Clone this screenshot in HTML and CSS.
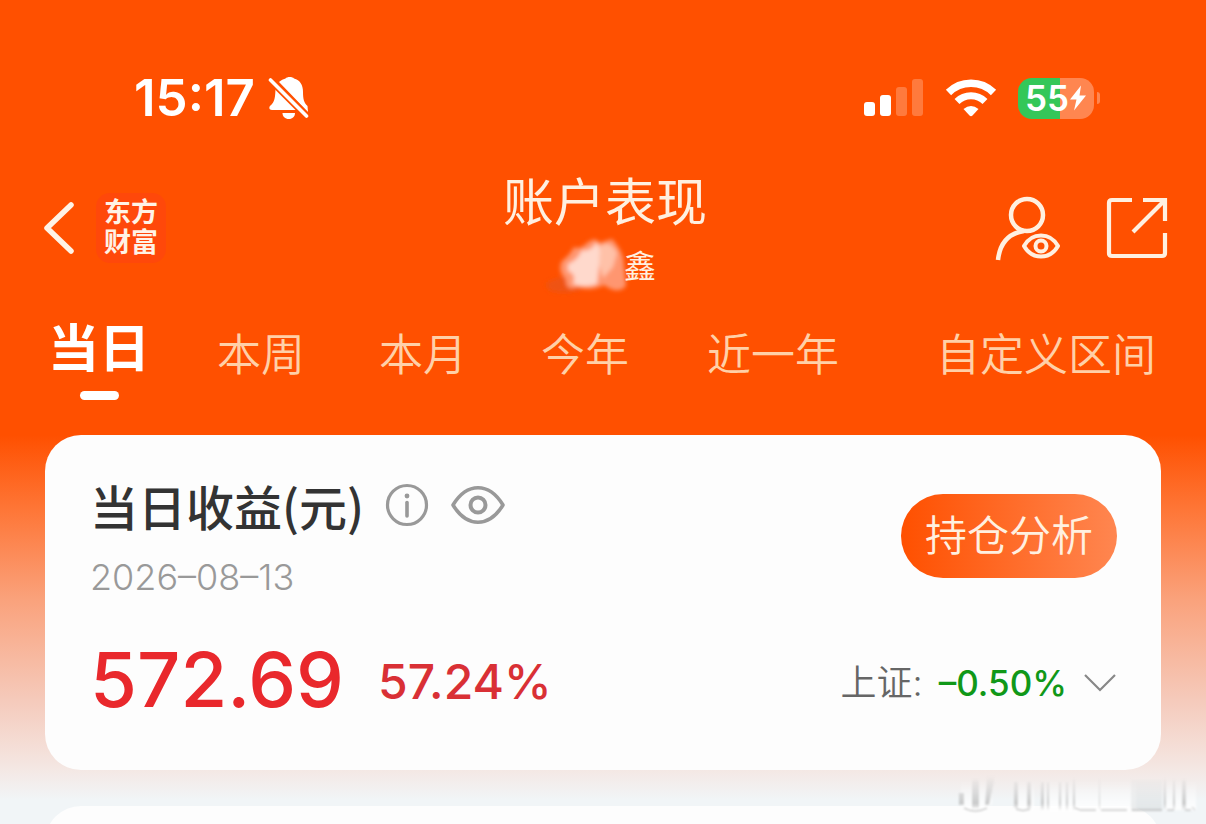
FILE: index.html
```html
<!DOCTYPE html>
<html lang="zh-CN">
<head>
<meta charset="utf-8">
<meta name="viewport" content="width=device-width, initial-scale=1">
<title>账户表现</title>
<link rel="stylesheet" href="styles.css">
</head>
<body>
<div class="page">
  <div class="status">
    <div class="status-left">
      <span class="clock">15:17</span>
      <svg class="bell" viewBox="0 0 42 44" width="42" height="44" aria-hidden="true">
        <path d="M11 6C14 3.500 16 3 17.500 2.500C19 .5 24.500 .5 26 2.500C32 4 35 9 35 16C35 23 36 27 39.500 30L40 36L11 6Z" fill="#fff"/>
        <path d="M7.500 10L31 34H4C.8 34 .8 31 2.500 29.500C6.500 26 7.500 22 7.500 10Z" fill="#fff"/>
        <path d="M14.500 37H27C27 40.500 24.500 43 20.800 43S14.500 40.500 14.500 37Z" fill="#fff"/>
        <path d="M2.500 4L38.500 40" stroke="#ff5000" stroke-width="7"/>
        <path d="M2.500 4L38.500 40" stroke="#fff" stroke-width="3.600" stroke-linecap="round"/>
      </svg>
    </div>
    <div class="status-right">
      <svg class="signal" viewBox="0 0 60 38" width="60" height="38" aria-hidden="true">
        <rect x="0" y="23" width="11" height="14" rx="3" fill="#fff"/>
        <rect x="16" y="16" width="11" height="21" rx="3" fill="#fff"/>
        <rect x="32" y="8" width="11" height="29" rx="3" fill="#ff7a3d"/>
        <rect x="48" y="0" width="11" height="37" rx="3" fill="#ff7a3d"/>
      </svg>
      <svg class="wifi" viewBox="0 0 52 38" width="52" height="38" aria-hidden="true">
        <path d="M3.500 13.500A32 32 0 0 1 48.500 13.500" fill="none" stroke="#fff" stroke-width="7.500"/>
        <path d="M12 22.500A20 20 0 0 1 40 22.500" fill="none" stroke="#fff" stroke-width="7"/>
        <path d="M18.500 30Q26 24 33.500 30L27.500 36.500Q26 38 24.500 36.500Z" fill="#fff"/>
      </svg>
      <div class="battery">
        <span class="battery-body"><span class="level">55</span><svg viewBox="0 0 18 26" width="18" height="26" aria-hidden="true"><path d="M12 .5L1 14.500H7.500L5 25.500L17 10.500H10.500Z" fill="#fff"/></svg></span>
        <span class="battery-tip"></span>
      </div>
    </div>
  </div>

  <header class="header">
    <div class="header-left">
      <button class="icon-button" aria-label="返回">
        <svg viewBox="0 0 34 54" width="34" height="54"><path d="M29 4L5 27L29 50" fill="none" stroke="#fff3e6" stroke-width="5.500" stroke-linecap="round" stroke-linejoin="round"/></svg>
      </button>
      <a class="brand" href="#home"><span>东方</span><span>财富</span></a>
    </div>
    <div class="heading">
      <h1 class="title">账户表现</h1>
      <div class="account">
        <svg class="smudge" viewBox="0 0 120 64" width="120" height="64" aria-hidden="true">
          <defs><filter id="soft" x="-20%" y="-20%" width="140%" height="140%"><feGaussianBlur stdDeviation="2"/></filter></defs>
          <g filter="url(#soft)">
            <path d="M15 49Q36 35 62 48Q44 62 20 56Z" fill="#e8561a" opacity=".7"/>
            <path d="M32 26Q40 20 44 12Q50 15 57 8Q66 1 69 8L82 4Q91 14 93 23L96 51Q88 60 74 50Q60 57 48 52Q35 57 36 44Q27 36 32 26Z" fill="#ff9670"/>
            <path d="M38 29Q48 25 52 15Q60 18 67 7Q73 18 69 31L67 49Q54 53 43 49Q47 39 38 36Z" fill="#ffd9cc"/>
            <path d="M70 11Q80 5 87 18L83 32L73 43L69 29Z" fill="#ffc1a8"/>
          </g>
        </svg>
        <span class="name">鑫</span>
      </div>
    </div>
    <div class="header-right">
      <button class="icon-button" aria-label="账户查看">
        <svg viewBox="0 0 66 66" width="66" height="66" fill="none" stroke="#fff0e0" stroke-width="4.500">
          <circle cx="33" cy="20" r="16"/>
          <path d="M4 65C6 47 16 38 30 36"/>
          <path d="M30 51C38 37 56 37 64 51C56 65 38 65 30 51Z" stroke-linejoin="round" stroke-width="4"/>
          <circle cx="47" cy="51" r="5.500" stroke-width="4"/>
        </svg>
      </button>
      <button class="icon-button" aria-label="分享">
        <svg viewBox="0 0 62 62" width="62" height="62" fill="none" stroke="#fff0e0" stroke-width="4.200">
          <path d="M26 3H6Q3 3 3 6V56Q3 59 6 59H56Q59 59 59 56V36"/>
          <path d="M37 3H59V24M58 4L27 35"/>
        </svg>
      </button>
    </div>
  </header>

  <nav class="tabs">
    <a class="tab active" href="#day">当日</a>
    <a class="tab" href="#week">本周</a>
    <a class="tab" href="#month">本月</a>
    <a class="tab" href="#year">今年</a>
    <a class="tab" href="#last">近一年</a>
    <a class="tab last" href="#custom">自定义区间</a>
  </nav>

  <main class="cards">
    <section class="card">
      <div class="row">
        <div>
          <div class="label-row">
            <h2 class="label">当日收益(元)</h2>
            <button class="icon-button" aria-label="说明">
              <svg viewBox="0 0 44 44" width="44" height="44" fill="none" stroke="#999"><circle cx="22" cy="22" r="19.500" stroke-width="3.200"/><circle cx="22" cy="13" r="2.400" fill="#999" stroke="none"/><path d="M22 19.500V33" stroke-width="3.600" stroke-linecap="round"/></svg>
            </button>
            <button class="icon-button" aria-label="显示金额">
              <svg viewBox="0 0 56 44" width="56" height="44" fill="none" stroke="#999"><path d="M3 22C17 -1 39 -1 53 22C39 45 17 45 3 22Z" stroke-width="3.600" stroke-linejoin="round"/><circle cx="28" cy="22" r="7.500" stroke-width="4"/></svg>
            </button>
          </div>
          <time class="date" datetime="2026-08-13">2026–08–13</time>
        </div>
        <button class="analysis">持仓分析</button>
      </div>
      <div class="row figures">
        <div class="profit"><strong class="amount">572.69</strong><span class="rate">57.24%</span></div>
        <button class="index"><span class="index-name">上证:</span><span class="index-rate">–0.50%</span>
          <svg viewBox="0 0 34 20" width="34" height="20" fill="none"><path d="M2 2L17 17L32 2" stroke="#888" stroke-width="2.200"/></svg>
        </button>
      </div>
    </section>
    <section class="card next"></section>
  </main>

  <svg class="watermark" viewBox="0 0 244 42" width="244" height="42" aria-hidden="true">
    <defs>
      <linearGradient id="fade" x1="0" y1="0" x2="0" y2="1"><stop offset="0" stop-color="#999" stop-opacity="0"/><stop offset=".8" stop-color="#999" stop-opacity=".5"/><stop offset="1" stop-color="#999" stop-opacity=".1"/></linearGradient>
      <linearGradient id="light" x1="0" y1="0" x2="0" y2="1"><stop offset="0" stop-color="#fff" stop-opacity="0"/><stop offset="1" stop-color="#fff" stop-opacity=".9"/></linearGradient>
      <linearGradient id="block" x1="0" y1="0" x2="0" y2="1"><stop offset="0" stop-color="#ccd0d1" stop-opacity=".1"/><stop offset="1" stop-color="#ccd0d1" stop-opacity=".4"/></linearGradient>
      <filter id="haze"><feGaussianBlur stdDeviation="1"/></filter>
    </defs>
    <g filter="url(#haze)">
      <path d="M5 7H36V30Q20 44 5 31ZM58 7H78V36H58ZM86 7H180V37H86ZM209 7H240V36H209Z" fill="url(#light)"/>
      <path d="M3 19H8V31H3ZM16 6H23V34H16ZM31 2H39L33 31H29ZM58 8H62V34H58ZM71 8H75V34H71ZM85 8H88V36H85ZM91 8H93V36H91ZM103 8H105V36H103ZM110 8H112V36H110ZM117 5H119V36H117ZM143 5H144V36H143ZM208 5H210V35H208ZM217 6H219V36H217ZM226 6H230V36H226Z" fill="url(#fade)"/>
      <path d="M175 6H206V37H175Z" fill="url(#block)"/>
      <path d="M8 34Q19 40 31 34M60 35Q67 38 74 35M119 34Q124 37 130 36H140M145 36H171M176 36H206M211 36H218M229 36H235M236 33L239 36" fill="none" stroke="#aaa"/>
    </g>
  </svg>
</div>
</body>
</html>
```
FILE: styles.css
```css
* {
  box-sizing: border-box;
}

body {
  margin: 0;
  background: #f1f5f7;
  font-family: Inter, "Noto Sans CJK SC", sans-serif;
}

.page {
  position: relative;
  height: 100vh;
  overflow: hidden;
  background: linear-gradient(#ff5000 0, #ff5000 435px, #fe7637 510px, #faa27c 600px, #f5cabb 700px, #f4e7e3 768px, #f1f5f7 800px);
}

h1, h2 {
  margin: 0;
}

button {
  border: 0;
  padding: 0;
  background: none;
  font: inherit;
  cursor: pointer;
}

a {
  color: inherit;
  text-decoration: none;
}

svg {
  display: block;
}

.status {
  display: flex;
  justify-content: space-between;
  align-items: center;
  padding: 68px 106px 0 134px;
  color: #fff;
}

.status-left,
.status-right {
  display: flex;
  align-items: center;
}

.status-left {
  gap: 13px;
}

.clock {
  font-size: 51px;
  line-height: 60px;
  font-weight: 600;
}

.status-right {
  gap: 21px;
}

.battery {
  display: flex;
  align-items: center;
  gap: 3px;
}

.battery-body {
  display: flex;
  align-items: center;
  justify-content: center;
  width: 76px;
  height: 41px;
  border-radius: 14px;
  background: linear-gradient(90deg, #34c759 55%, #ff8650 55%);
}

.level {
  font-size: 35px;
  line-height: 41px;
  font-weight: 600;
}

.battery-tip {
  width: 3px;
  height: 12px;
  border-radius: 0 6px 6px 0;
  background: #ff8650;
}

.header {
  display: grid;
  grid-template-columns: 1fr auto 1fr;
  align-items: center;
  height: 136px;
  margin-top: 43px;
  padding: 0 38px 0 42px;
}

.header-left,
.header-right {
  display: flex;
  align-items: center;
  margin-bottom: 22px;
}

.header-left {
  gap: 20px;
}

.header-right {
  justify-content: flex-end;
  gap: 46px;
}

.brand {
  display: flex;
  flex-direction: column;
  align-items: center;
  justify-content: center;
  width: 70px;
  height: 70px;
  border-radius: 14px;
  background: #ff480a;
  color: #fff3e6;
  font-size: 27px;
  line-height: 30px;
  font-weight: 700;
}

.heading {
  align-self: start;
  display: flex;
  flex-direction: column;
  align-items: center;
}

.title {
  color: #fff0e0;
  font-size: 51px;
  line-height: 64px;
  font-weight: 400;
}

.account {
  display: flex;
  align-items: center;
}

.smudge {
  margin-left: -24px;
}

.name {
  margin-left: -26px;
  color: #fff0e0;
  font-size: 32px;
  line-height: 62px;
}

.tabs {
  display: grid;
  grid-template-columns: 162fr 162fr 162fr 162fr 214fr 326fr;
  height: 128px;
  padding-left: 18px;
}

.tab {
  padding-top: 18px;
  color: #ffd0a8;
  font-size: 44px;
  line-height: 60px;
  font-weight: 350;
  text-align: center;
}

.tab.last {
  padding-right: 50px;
  text-align: right;
}

.tab.active {
  display: flex;
  flex-direction: column;
  align-items: center;
  padding-top: 12px;
  color: #fff;
  font-size: 51px;
  font-weight: 700;
}

.tab.active::after {
  content: "";
  width: 39px;
  height: 9px;
  margin-top: 12px;
  border-radius: 5px;
  background: #fff;
}

.cards {
  display: flex;
  flex-direction: column;
  gap: 36px;
  padding: 0 45px;
}

.card {
  padding: 38px 44px 46px 45px;
  border-radius: 36px;
  background: #fdfdfd;
}

.next {
  height: 80px;
}

.row {
  display: flex;
  justify-content: space-between;
  align-items: center;
}

.label-row {
  display: flex;
  align-items: center;
  gap: 21px;
}

.label {
  color: #333;
  font-family: "Noto Sans CJK SC", sans-serif;
  font-size: 48px;
  line-height: 64px;
  font-weight: 500;
}

.date {
  display: block;
  margin-top: 18px;
  color: #999;
  font-size: 36px;
  line-height: 44px;
  font-weight: 350;
}

.analysis {
  width: 216px;
  height: 84px;
  border-radius: 42px;
  background: linear-gradient(90deg, #ff5000, #ff8650);
  color: #fff0e0;
  font-size: 42px;
  line-height: 60px;
  font-weight: 350;
}

.figures {
  margin-top: 35px;
}

.profit {
  display: flex;
  align-items: center;
  gap: 34px;
}

.amount {
  color: #e9282c;
  font-size: 76px;
  line-height: 90px;
  font-weight: 500;
}

.rate {
  margin-top: 6px;
  color: #d93035;
  font-size: 48px;
  line-height: 60px;
  font-weight: 500;
}

.index {
  display: flex;
  align-items: center;
  margin-top: 8px;
  font-size: 35px;
  line-height: 48px;
}

.index-name {
  color: #666;
  font-size: 36px;
  font-weight: 350;
}

.index-rate {
  margin: 0 16px;
  color: #109818;
  font-weight: 500;
}

.watermark {
  position: absolute;
  right: 6px;
  bottom: 8px;
}
```
